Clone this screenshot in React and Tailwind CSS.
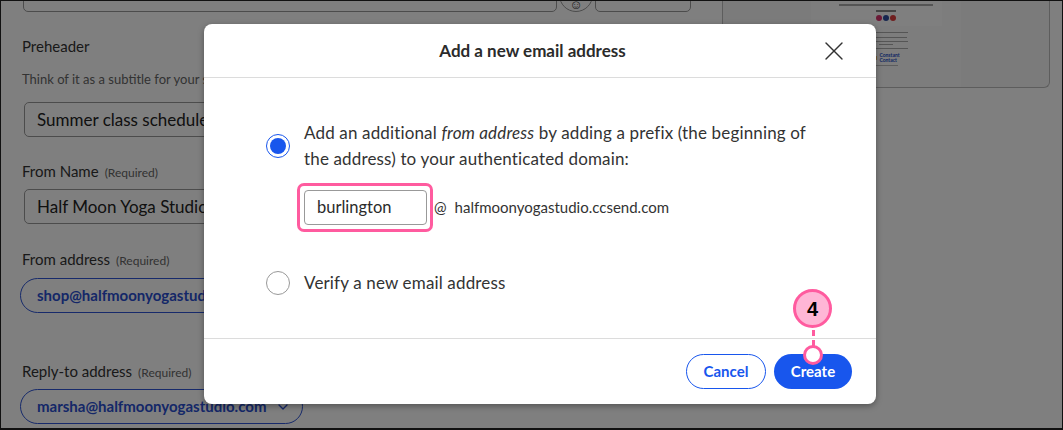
import React from 'react';
import { X, ChevronDown } from 'lucide-react';

function Label({ text, required }) {
  return (
    <div className="leading-[20px] text-[15px] text-[#333]">
      {text}
      {required && <span className="ml-[6px] text-[12px] text-[#666]">(Required)</span>}
    </div>
  );
}

function PageBehind() {
  return (
    <div className="flex">
      {/* form column */}
      <div className="w-[721px] pl-[20px]">
        <div className="mt-[-25px] flex items-end gap-[2px] pl-[2px]">
          <div className="h-[36px] w-[534px] rounded-[5px] border border-[#999] px-[13px] pt-[2px] text-[16px] text-[#222]">
            Enjoy yoga all July today
          </div>
          <div className="flex h-[36px] w-[34px] items-start justify-center rounded-full border border-[#999] pt-[18px] text-[13px] font-bold text-[#333]">
            ☺
          </div>
          <div className="h-[36px] w-[96px] rounded-[5px] border border-[#999]" />
        </div>

        <div className="mt-[24px] pl-[1px]">
          <Label text="Preheader" />
        </div>
        <div className="mt-[14px] pl-[1px] text-[13px] leading-[18px] text-[#666]">
          Think of it as a subtitle for your subject line
        </div>
        <div className="ml-[3px] mt-[14px] flex h-[35px] w-[534px] items-center rounded-[5px] border border-[#999] px-[12px] text-[17px] text-[#222]">
          Summer class schedules are here!
        </div>

        <div className="mt-[24px] pl-[1px]">
          <Label text="From Name" required />
        </div>
        <div className="ml-[3px] mt-[6px] flex h-[35px] w-[534px] items-center rounded-[5px] border border-[#999] px-[12px] text-[17px] text-[#222]">
          Half Moon Yoga Studio
        </div>

        <div className="mt-[25px] pl-[1px]">
          <Label text="From address" required />
        </div>
        <div className="ml-[-1px] mt-[7px] flex h-[35px] w-[300px] items-center rounded-full border border-[#2e55d6] px-[16px] text-[15px] font-bold text-[#2a4fd0]">
          shop@halfmoonyogastudio.ccsend.com
        </div>

        <div className="mt-[48px] pl-[1px]">
          <Label text="Reply-to address" required />
        </div>
        <div className="ml-[-1px] mt-[6px] flex h-[35px] w-[283px] items-center justify-between rounded-full border border-[#2e55d6] pl-[16px] pr-[11px] text-[15px] font-bold text-[#2a4fd0]">
          <span>marsha@halfmoonyogastudio.com</span>
          <ChevronDown className="h-[16px] w-[16px]" strokeWidth={2} />
        </div>
      </div>

      {/* preview panel */}
      <div className="flex h-[87px] w-[328px] justify-center rounded-br-[6px] border-b border-l border-r border-[#bbb] bg-[#f6f6f6] pl-[88px] pr-[88px]">
        <div className="flex w-[150px] flex-col items-center bg-[#fafafa]">
          <div className="flex h-[25px] w-[112px] flex-col items-center bg-white">
            <div className="mt-[3px] h-[2px] w-[94px] bg-[#aaa]" />
            <div className="mt-[4px] h-[2px] w-[20px] bg-[#888]" />
            <div className="mt-[3px] flex gap-[1px]">
              <span className="h-[6px] w-[6px] rounded-full bg-[#d6336c]" />
              <span className="h-[6px] w-[6px] rounded-full bg-[#2f4ea1]" />
              <span className="h-[6px] w-[6px] rounded-full bg-[#e03e3e]" />
            </div>
          </div>
          <div className="mt-[6px] h-[1px] w-[44px] bg-[#aaa]" />
          <div className="mt-[4px] h-[1px] w-[42px] bg-[#aaa]" />
          <div className="mt-[3px] h-[1px] w-[44px] bg-[#aaa]" />
          <div className="mt-[2px] h-[1px] w-[14px] bg-[#aaa]" />
          <div className="mt-[3px] h-[1px] w-[44px] bg-[#aaa]" />
          <div className="mt-[4px] flex items-center gap-[2px]">
            <span className="h-[6px] w-[5px] rounded-full border border-[#e8a13a]" />
            <span className="text-[5px] font-bold leading-[5px] text-[#1f4fc8]">
              Constant
              <br />
              Contact
            </span>
          </div>
          <div className="mt-[2px] h-[1px] w-[24px] bg-[#bbb]" />
        </div>
      </div>
    </div>
  );
}

function Modal() {
  return (
    <div className="absolute left-[203px] top-[23px] w-[672px] overflow-hidden rounded-[8px] bg-white shadow-[0_2px_6px_rgba(0,0,0,0.35)]">
      <div className="flex h-[54px] items-center border-b border-[#dcdcdc] pl-[24px] pr-[26px]">
        <div className="flex-1 pl-[19px] text-center text-[17px] font-bold text-[#2b2b2b]">
          Add a new email address
        </div>
        <X className="h-[32px] w-[32px] text-[#333]" strokeWidth={1} />
      </div>

      <div className="h-[261px] border-b border-[#dcdcdc] pl-[62px] pt-[42px]">
        <div className="flex items-center gap-[14px]">
          <div className="flex h-[24px] w-[24px] items-center justify-center rounded-full border-[1.5px] border-[#1856ed]">
            <div className="h-[16px] w-[16px] rounded-full bg-[#1856ed]" />
          </div>
          <div className="text-[17px] leading-[26px] tracking-[0.15px] text-[#333]">
            Add an additional <i>from address</i> by adding a prefix (the beginning of
            <br />
            the address) to your authenticated domain:
          </div>
        </div>

        <div className="ml-[31px] mt-[11px] flex items-center">
          <div className="rounded-[7px] border-[3px] border-[#ff5b9f] p-[4px] pr-[3px]">
            <div className="flex h-[35px] w-[123px] items-center rounded-[4px] border border-[#999] px-[12px] text-[16.5px] text-[#2b2b2b]">
              burlington
            </div>
          </div>
          <span className="ml-[1px] text-[15px] text-[#333]">@</span>
          <span className="ml-[8px] text-[15px] text-[#333]">halfmoonyogastudio.ccsend.com</span>
        </div>

        <div className="mt-[39px] flex items-center gap-[14px]">
          <div className="h-[24px] w-[24px] rounded-full border border-[#999]" />
          <div className="text-[17px] leading-[24px] tracking-[0.15px] text-[#333]">Verify a new email address</div>
        </div>
      </div>

      <div className="flex h-[65px] items-center justify-end gap-[8px] pr-[24px]">
        <button className="flex h-[35px] w-[80px] items-center justify-center rounded-full border border-[#1856ed] text-[15px] font-bold text-[#1856ed]">
          Cancel
        </button>
        <button className="flex h-[35px] w-[78px] items-center justify-center rounded-full bg-[#1856ed] text-[15px] font-bold text-white">
          Create
        </button>
      </div>
    </div>
  );
}

export default function App() {
  return (
    <div className="relative h-[430px] w-[1063px] overflow-hidden border border-b-2 border-[#111] bg-white font-['Lato',sans-serif]">
      <PageBehind />
      <div className="absolute inset-0 bg-black/50" />
      <Modal />

      {/* step annotation */}
      <div className="absolute left-[792px] top-[288px] flex h-[39px] w-[39px] items-center justify-center rounded-full border-[3px] border-[#ff5b9f] bg-[#ffb6d6] font-['Liberation_Sans',sans-serif] text-[20px] font-bold text-black">
        4
      </div>
      <div className="absolute left-[811px] top-[329px] h-[16px] border-l-[3px] border-dashed border-[#ff5b9f]" />
      <div className="absolute left-[802px] top-[344px] h-[20px] w-[20px] rounded-full border-[3px] border-[#ff5b9f] bg-white" />
    </div>
  );
}
